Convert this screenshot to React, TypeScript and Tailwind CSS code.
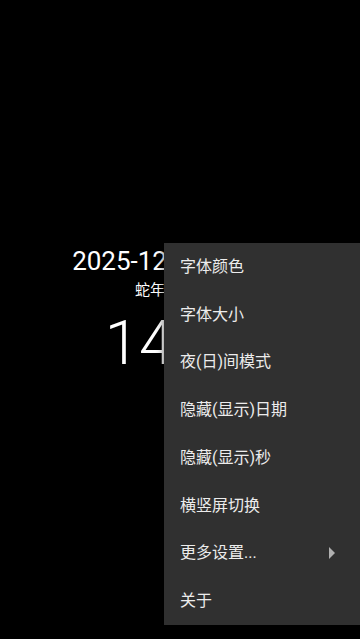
export default function App() {
  const items = ['字体颜色', '字体大小', '夜(日)间模式', '隐藏(显示)日期', '隐藏(显示)秒', '横竖屏切换', '更多设置...', '关于'];

  return (
    <div
      className="relative h-[639px] w-[360px] overflow-hidden bg-black text-white"
      style={{ fontFamily: 'Roboto, "Noto Sans CJK SC", sans-serif' }}
    >
      <div className="flex flex-col items-center pt-[244px]">
        <div className="text-[26px] leading-[35px]">2025-12-21 星期日</div>
        <div className="text-[15px] leading-[22px]">蛇年冬月初二</div>
        <div className="mt-[2px] text-[62px] font-light leading-[80px]">14:35</div>
      </div>

      <div className="absolute right-0 top-[243px] w-[196px] bg-[#303030] shadow-[0_2px_8px_rgba(0,0,0,0.6)]">
        {items.map((item) => (
          <div key={item} className="flex h-[47.75px] items-center justify-between pl-[16px] pr-[25px] text-[16px] text-[#ececec]">
            <span>{item}</span>
            {item === '更多设置...' && (
              <svg width="6" height="12" viewBox="0 0 6 12">
                <path d="M0 0 L6 6 L0 12 Z" fill="#b0b0b0" />
              </svg>
            )}
          </div>
        ))}
      </div>
    </div>
  );
}
